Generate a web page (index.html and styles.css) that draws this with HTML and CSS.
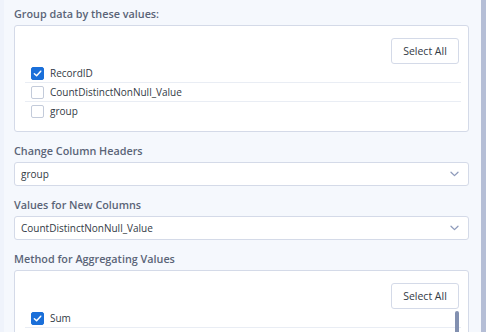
FILE: index.html
```html
<!DOCTYPE html>
<html lang="en">
<head>
<meta charset="UTF-8">
<meta name="viewport" content="width=device-width, initial-scale=1.0">
<title>Pivot Settings</title>
<link rel="stylesheet" href="styles.css">
</head>
<body>
<div class="page">
<div class="panel">
<div class="field">
<label class="field-label">Group data by these values:</label>
<div class="list-box">
<div class="list-actions">
<button class="select-all">Select All</button>
</div>
<div class="list">
<label class="list-row">
<span class="check checked">
<svg width="9" height="9" viewBox="0 0 10 10" fill="none" stroke="white" stroke-width="1.6" stroke-linecap="round" stroke-linejoin="round"><path d="M1.5 5.2 L4 7.6 L8.6 2.4"/></svg>
</span>
<span class="row-text">RecordID</span>
</label>
<label class="list-row">
<span class="check"></span>
<span class="row-text">CountDistinctNonNull_Value</span>
</label>
<label class="list-row">
<span class="check"></span>
<span class="row-text">group</span>
</label>
</div>
</div>
</div>

<div class="field">
<label class="field-label">Change Column Headers</label>
<div class="select">
<span class="select-value">group</span>
<svg class="chevron" width="9" height="6" viewBox="0 0 9 6" fill="none" stroke="currentColor" stroke-width="1.3" stroke-linecap="round" stroke-linejoin="round"><path d="M1 1.2 L4.5 4.6 L8 1.2"/></svg>
</div>
</div>

<div class="field">
<label class="field-label">Values for New Columns</label>
<div class="select">
<span class="select-value">CountDistinctNonNull_Value</span>
<svg class="chevron" width="9" height="6" viewBox="0 0 9 6" fill="none" stroke="currentColor" stroke-width="1.3" stroke-linecap="round" stroke-linejoin="round"><path d="M1 1.2 L4.5 4.6 L8 1.2"/></svg>
</div>
</div>

<div class="field">
<label class="field-label">Method for Aggregating Values</label>
<div class="list-box">
<div class="list-actions">
<button class="select-all">Select All</button>
</div>
<div class="list scrolling">
<label class="list-row">
<span class="check checked">
<svg width="9" height="9" viewBox="0 0 10 10" fill="none" stroke="white" stroke-width="1.6" stroke-linecap="round" stroke-linejoin="round"><path d="M1.5 5.2 L4 7.6 L8.6 2.4"/></svg>
</span>
<span class="row-text">Sum</span>
</label>
<span class="scroll-thumb"></span>
</div>
</div>
</div>
</div>
<div class="page-scroll">
<span class="page-scroll-thumb"></span>
</div>
</div>
</body>
</html>
```
FILE: styles.css
```css
body {
    margin: 0;
    font-family: "Open Sans", "Noto Sans", sans-serif;
    font-size: 10px;
    color: #333a45;
    background-color: #f5f8fd;
    overflow: hidden;
}

.page {
    display: flex;
    height: 332px;
    overflow: hidden;
    border-left: 4px solid #eff3fb;
}

.panel {
    flex: 1;
    display: flex;
    flex-direction: column;
    gap: 12px;
    padding: 7px 9px 0 10px;
}

.field {
    display: flex;
    flex-direction: column;
}

.field-label {
    font-weight: 600;
    font-size: 10.8px;
    line-height: 14px;
    color: #5a6477;
    margin-bottom: 4px;
}

.list-box {
    background: white;
    border: 1px solid #d4dae8;
    border-radius: 3px;
    padding: 12px 7px 11px 10px;
    flex-shrink: 0;
}

.list-actions {
    display: flex;
    justify-content: flex-end;
    padding-right: 2px;
}

.select-all {
    height: 26px;
    width: 68px;
    background: white;
    border: 1px solid #d4dae8;
    border-radius: 3px;
    font-family: inherit;
    font-size: 10.5px;
    color: #333a45;
    padding: 0;
    cursor: pointer;
}

.list {
    display: flex;
    flex-direction: column;
    position: relative;
}

.list-row {
    display: flex;
    align-items: center;
    gap: 6px;
    height: 18px;
    padding-left: 6px;
    border-bottom: 1px solid #e9edf4;
}

.list-row:last-child {
    border-bottom: none;
}

.list.scrolling {
    height: 40px;
}

.list.scrolling .list-row {
    border-bottom: 1px solid #e9edf4;
}

.check {
    width: 11px;
    height: 11px;
    border: 1px solid #c3cbda;
    border-radius: 2px;
    background: white;
    display: flex;
    justify-content: center;
    align-items: center;
    flex-shrink: 0;
}

.check.checked {
    background: #1a6fd9;
    border-color: #1a6fd9;
}

.row-text {
    line-height: 18px;
}

.scroll-thumb {
    position: absolute;
    right: 2px;
    top: 2px;
    width: 4px;
    height: 60px;
    border-radius: 2px;
    background: #8290b0;
}

.select {
    height: 22px;
    background: white;
    border: 1px solid #d4dae8;
    border-radius: 3px;
    display: flex;
    align-items: center;
    justify-content: space-between;
    padding: 0 9px 0 6px;
}

.chevron {
    color: #8f9bbb;
}

.page-scroll {
    width: 8px;
    display: flex;
    background: #f5f8fd;
}

.page-scroll-thumb {
    margin-left: 3px;
    flex: 1;
    background: #b5bed6;
}
```
